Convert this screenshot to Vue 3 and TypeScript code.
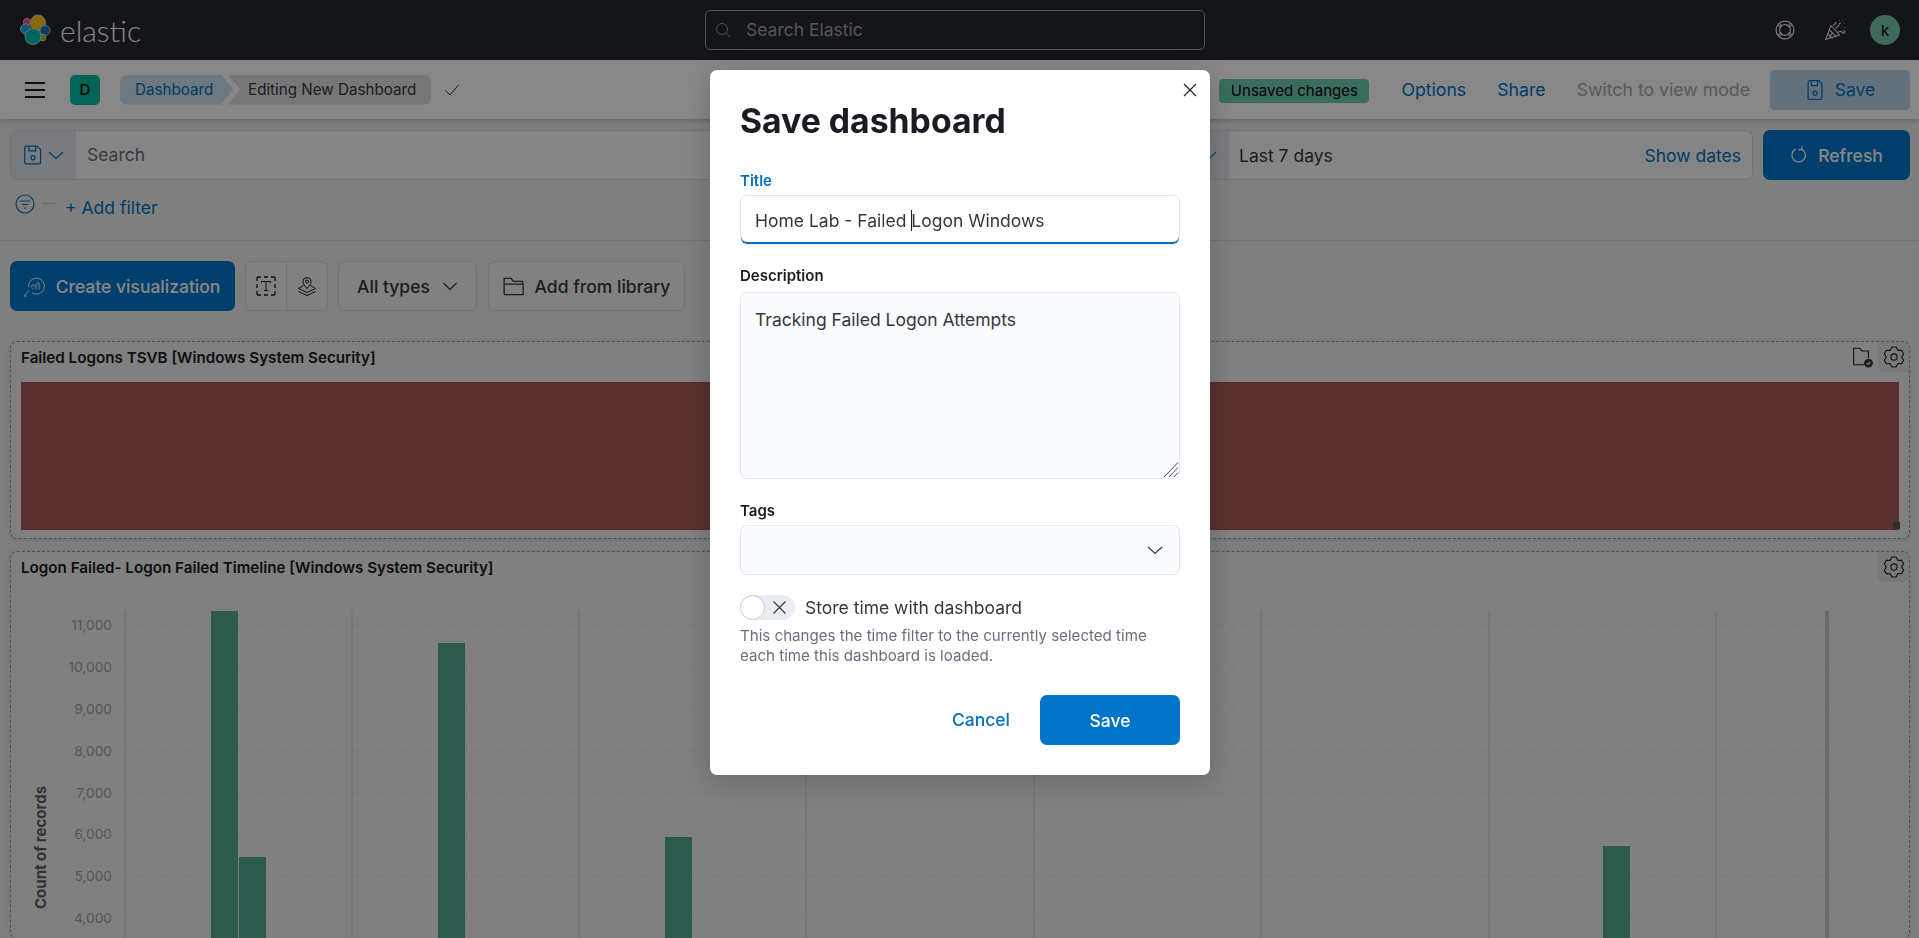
<script setup lang="ts">
const yTicks = [
  { label: '11,000', y: 625 },
  { label: '10,000', y: 667 },
  { label: '9,000', y: 709 },
  { label: '8,000', y: 751 },
  { label: '7,000', y: 793 },
  { label: '6,000', y: 834 },
  { label: '5,000', y: 876 },
  { label: '4,000', y: 918 }
]
const xTicks = [125, 352, 579, 806, 1034, 1261, 1489, 1716]
const bars = [
  { x: 211, w: 27, top: 611 },
  { x: 239, w: 27, top: 857 },
  { x: 438, w: 27, top: 643 },
  { x: 665, w: 27, top: 837 },
  { x: 1603, w: 27, top: 846 }
]

// six lobed outline, same shape for both panel gears
const gearPath = (() => {
  const pts: string[] = []
  for (let i = 0; i < 6; i++) {
    const a = (i * Math.PI) / 3 - Math.PI / 2
    const steps: [number, number][] = [
      [5.6, -0.52],
      [7.4, -0.2],
      [7.4, 0.2],
      [5.6, 0.52]
    ]
    for (const [r, d] of steps) {
      pts.push(`${(8 + r * Math.cos(a + d)).toFixed(2)} ${(8 + r * Math.sin(a + d)).toFixed(2)}`)
    }
  }
  return `M${pts.join('L')}Z`
})()
</script>

<template>
  <div class="page">
    <header class="top-bar">
      <div class="brand">
        <svg class="logo" width="32" height="32" viewBox="0 0 32 32">
          <g stroke="#e8e8e8" stroke-width="0.8">
            <circle cx="8" cy="8" r="3.6" fill="#f04e98" />
            <circle cx="6.5" cy="15" r="5" fill="#1ba9f5" />
            <ellipse cx="19" cy="9" rx="7.5" ry="8" fill="#fec514" />
            <circle cx="26" cy="16.5" r="5" fill="#0077cc" />
            <circle cx="23.5" cy="23.5" r="3.4" fill="#93c90e" />
            <circle cx="14" cy="22.5" r="8" fill="#00bfb3" />
          </g>
        </svg>
        <span class="wordmark">elastic</span>
      </div>
      <div class="global-search">
        <svg width="16" height="16" viewBox="0 0 16 16" fill="none" stroke="#9a9ca0">
          <circle cx="7" cy="7" r="5.5" />
          <path d="M11 11l4 4" />
        </svg>
        <span class="global-search-text">Search Elastic</span>
      </div>
      <div class="top-icons">
        <svg width="20" height="20" viewBox="0 0 22 22" fill="none" stroke="#e4e4e4" stroke-width="1.3">
          <circle cx="11" cy="11" r="9.8" />
          <circle cx="11" cy="11" r="6" />
          <path d="M5 3.800l3 3.200M17 3.800l-3 3.200M5 18.200l3-3.200M17 18.200l-3-3.200M3.400 5.600l3.400 2.600M18.600 5.600l-3.400 2.600M3.400 16.400l3.400-2.600M18.600 16.400l-3.400-2.600" />
        </svg>
        <svg class="party" width="22" height="22" viewBox="0 0 22 22" fill="none" stroke="#e4e4e4" stroke-width="1.1">
          <path d="M1.500 20.500L7 6.500l8.500 9.500z" stroke-linejoin="round" />
          <path d="M3.800 15l5 4.300M5.400 10.800l7 7.200M8.500 13l-3 6" />
          <path d="M9 6.500c1.500-1 3-1.500 3-3.500M11.500 9.500c1.500-2 3.500-2 3.500-4 0-1 1-1.500 1.800-1.300" />
          <path d="M14.500 13c1.500-1 3-.5 4 .5s2.200.8 2.500-.5c.2-1-1-1.600-1.700-1" />
          <path d="M15 1.500l.4.400M18.500 1l.4.400M20 4.500l.4.400M18 7l.4.400M20.500 8.500l.4.400" />
        </svg>
        <div class="user-avatar">k</div>
      </div>
    </header>

    <div class="sub-bar">
      <div class="burger"><i></i><i></i><i></i></div>
      <div class="app-badge">D</div>
      <nav class="crumbs">
        <span class="crumb crumb-link">Dashboard</span>
        <span class="crumb crumb-current">Editing New Dashboard</span>
      </nav>
      <svg class="crumb-check" width="16" height="16" viewBox="0 0 16 16" fill="none" stroke="#343741">
        <path d="M1.500 8.500L6 13 14.500 3" />
      </svg>
      <div class="sub-actions">
        <span class="unsaved">Unsaved changes</span>
        <a class="link">Options</a>
        <a class="link">Share</a>
        <a class="link disabled">Switch to view mode</a>
        <button class="save-top">
          <svg width="20" height="20" viewBox="0 0 16 16" fill="none" stroke="currentColor">
            <path d="M3 .5h8l2.500 2.500v11.500a1 1 0 01-1 1h-9a1 1 0 01-1-1v-13a1 1 0 011-1z" />
            <path d="M5 .5v4h5v-4" />
            <circle cx="8" cy="10.500" r="1.600" />
          </svg>
          Save
        </button>
      </div>
    </div>

    <div class="query-row">
      <div class="query-box">
        <div class="query-prepend">
          <svg width="22" height="22" viewBox="0 0 16 16" fill="none" stroke="#0071c2" stroke-width="0.9">
            <path d="M3 1.500h8l2.500 2.500v9.500a1 1 0 01-1 1h-9.500a1 1 0 01-1-1v-11a1 1 0 011-1z" />
            <path d="M5 1.500v3.500h5v-3.500" />
            <circle cx="8" cy="10" r="1.500" />
          </svg>
          <svg width="16" height="16" viewBox="0 0 16 16" fill="none" stroke="#0071c2" stroke-width="1.200">
            <path d="M1 5l7 6.500L15 5" />
          </svg>
        </div>
        <span class="query-text">Search</span>
      </div>
      <div class="time-box">
        <div class="time-prepend">
          <svg width="16" height="16" viewBox="0 0 16 16" fill="none" stroke="#0071c2" stroke-width="1.200">
            <path d="M2 5l6 6 6-6" />
          </svg>
        </div>
        <span class="time-value">Last 7 days</span>
        <a class="link show-dates">Show dates</a>
      </div>
      <button class="refresh">
        <svg width="18" height="18" viewBox="0 0 16 16" fill="none" stroke="currentColor" stroke-width="1.100">
          <path d="M10 2.600a6 6 0 11-5 .2" />
          <path d="M10.500 .5v3h-3" transform="translate(0 -.2)" />
        </svg>
        Refresh
      </button>
    </div>

    <div class="filter-row">
      <svg width="20" height="20" viewBox="0 0 20 20" fill="none" stroke="#0071c2" stroke-width="1.200">
        <circle cx="10" cy="10" r="9" />
        <path d="M5 7h10M7 10.500h6M9 14h2" />
      </svg>
      <span class="filter-dash"></span>
      <a class="link add-filter">+ Add filter</a>
    </div>

    <div class="toolbar">
      <button class="create-viz">
        <svg width="22" height="22" viewBox="0 0 22 22" fill="none" stroke="currentColor" stroke-width="0.9">
          <path d="M5.500 12a8 8 0 113.500 5.800" />
          <path d="M1 21l5-5.500M1 21h3" />
          <path d="M7.500 12.500l2.500-3 2 2 3.500-5" />
          <path d="M10 14.500v-2M13 14.500V11M16 14.500V8" />
        </svg>
        Create visualization
      </button>
      <div class="icon-group">
        <span class="icon-cell">
          <svg width="20" height="20" viewBox="0 0 20 20" fill="none" stroke="#1a1c21">
            <path d="M1 5V2a1 1 0 011-1h3M8 1h4M15 1h3a1 1 0 011 1v3M19 8v4M19 15v3a1 1 0 01-1 1h-3M12 19H8M5 19H2a1 1 0 01-1-1v-3M1 12V8" stroke-width="1.300" />
            <path d="M5.500 7V5.500h9V7M10 5.500v9M8 14.500h4" />
          </svg>
        </span>
        <span class="icon-cell">
          <svg width="20" height="20" viewBox="0 0 20 20" fill="none" stroke="#1a1c21">
            <path d="M10 12.500C7.500 9.500 6 8 6 5.500a4 4 0 018 0c0 2.500-1.500 4-4 7z" />
            <circle cx="10" cy="5.500" r="1.500" />
            <path d="M6.500 9.500L1.500 12.500 10 16.500l8.500-4-5-3M1.500 15.500L10 19.500l8.500-4" />
          </svg>
        </span>
      </div>
      <button class="tool-btn all-types">
        All types
        <svg width="16" height="16" viewBox="0 0 16 16" fill="none" stroke="#343741" stroke-width="1.200">
          <path d="M1.500 5l6.500 6.500L14.500 5" />
        </svg>
      </button>
      <button class="tool-btn library">
        <svg width="23" height="23" viewBox="0 0 20 20" fill="none" stroke="#343741" stroke-width="1.100">
          <path d="M1 17V3h6l2 2.500h8V8M1 17h16.500V8H1" />
        </svg>
        Add from library
      </button>
    </div>

    <section class="panel panel-metric">
      <div class="panel-head">
        <h3>Failed Logons TSVB [Windows System Security]</h3>
        <svg class="folder-check" width="22" height="22" viewBox="0 0 20 20" fill="none" stroke="#1a1c21">
          <path d="M12 17H1.500V2H7l2 2.500h6V11" />
          <circle cx="15" cy="15.500" r="4" fill="#343741" stroke="none" />
          <path d="M13.300 15.500l1.300 1.300 2-2.400" stroke="#fff" />
        </svg>
        <span class="gear-cell">
          <svg width="22" height="22" viewBox="0 0 16 16" fill="none" stroke="#1a1c21" stroke-width="0.800" stroke-linejoin="round">
            <path :d="gearPath" />
            <circle cx="8" cy="8" r="2.300" />
          </svg>
        </span>
      </div>
      <div class="metric-fill"></div>
      <span class="resize-handle"></span>
    </section>

    <section class="panel panel-chart">
      <div class="panel-head">
        <h3>Logon Failed- Logon Failed Timeline [Windows System Security]</h3>
        <span class="gear-cell">
          <svg width="22" height="22" viewBox="0 0 16 16" fill="none" stroke="#1a1c21" stroke-width="0.800" stroke-linejoin="round">
            <path :d="gearPath" />
            <circle cx="8" cy="8" r="2.300" />
          </svg>
        </span>
      </div>
      <svg class="chart" width="1898" height="338" viewBox="11 600 1898 338">
        <line
          v-for="t in yTicks"
          :key="t.label"
          x1="125"
          x2="1830"
          :y1="t.y"
          :y2="t.y"
          stroke="#e6e6e6"
          stroke-dasharray="6 6"
        />
        <line v-for="x in xTicks" :key="x" :x1="x" :x2="x" y1="611" y2="938" stroke="#dcdcdc" stroke-width="1.500" />
        <rect x="1825" y="611" width="4" height="327" fill="#c8c8c8" />
        <rect v-for="b in bars" :key="b.x" :x="b.x" :y="b.top" :width="b.w" :height="938 - b.top" fill="#54ab92" />
        <text v-for="t in yTicks" :key="t.label" class="tick" x="112" :y="t.y + 5" text-anchor="end">{{ t.label }}</text>
        <text class="axis-title" transform="translate(46 909) rotate(-90)">Count of records</text>
      </svg>
    </section>

    <div class="mask">
      <div class="modal">
        <svg class="modal-close" width="14" height="14" viewBox="0 0 14 14" fill="none" stroke="#1a1c21" stroke-width="1.100">
          <path d="M1 1l12 12M13 1L1 13" />
        </svg>
        <h2>Save dashboard</h2>

        <label class="field-label active first">Title</label>
        <div class="field field-focus">
          <span>Home Lab - Failed <i class="caret"></i>Logon Windows</span>
        </div>

        <label class="field-label desc">Description</label>
        <div class="field field-area">
          <span>Tracking Failed Logon Attempts</span>
          <svg class="area-grip" width="16" height="17" viewBox="0 0 16 17" stroke="#343741" stroke-width="0.900">
            <path d="M1 16L15 1.500M6 16L15 6.500M11 16l4-4.500" />
          </svg>
        </div>

        <label class="field-label tags">Tags</label>
        <div class="field field-select">
          <svg width="16" height="16" viewBox="0 0 16 16" fill="none" stroke="#343741" stroke-width="1.200">
            <path d="M1 5l7 6.500L15 5" />
          </svg>
        </div>

        <div class="toggle-row">
          <span class="toggle">
            <span class="knob"></span>
            <svg width="13" height="13" viewBox="0 0 13 13" fill="none" stroke="#343741" stroke-width="1.100">
              <path d="M.5.5l12 12M12.500.5l-12 12" />
            </svg>
          </span>
          <span class="toggle-label">Store time with dashboard</span>
        </div>
        <p class="help">This changes the time filter to the currently selected time each time this dashboard is loaded.</p>

        <div class="modal-foot">
          <a class="cancel">Cancel</a>
          <button class="save-main">Save</button>
        </div>
      </div>
    </div>
  </div>
</template>

<style>
html,
body {
  height: 100%;
  overflow: hidden;
}
</style>

<style scoped>
.page {
  position: relative;
  height: 938px;
  overflow: hidden;
  background: #f0f0f0;
  font-family: Inter, 'Liberation Sans', sans-serif;
  font-size: 17.5px;
  color: #343741;
}

button {
  font-family: inherit;
  font-size: inherit;
  border: 0;
  display: flex;
  align-items: center;
  justify-content: center;
}

.link {
  color: #0071c2;
}

.link.disabled {
  color: #a2abba;
}

.top-bar {
  height: 60px;
  background: #262830;
  display: flex;
  align-items: center;
  position: relative;
}

.brand {
  width: 705px;
  display: flex;
  align-items: center;
  padding-left: 19px;
  box-sizing: border-box;
}

.wordmark {
  margin-left: 9px;
  font-family: Lato, sans-serif;
  font-weight: 300;
  font-size: 30px;
  color: #fff;
  line-height: 40px;
}

.global-search {
  width: 500px;
  height: 40px;
  box-sizing: border-box;
  border: 1px solid #9b9da1;
  border-radius: 5px;
  background: #262830;
  display: flex;
  align-items: center;
  gap: 15px;
  padding-left: 9px;
  color: #9fa2a8;
}

.global-search-text {
  margin-bottom: 1px;
}

.top-icons {
  margin-left: auto;
  padding-right: 19px;
  display: flex;
  align-items: center;
  gap: 28px;
}

.party {
  margin-left: 1px;
}

.user-avatar {
  margin-left: -4px;
  width: 30px;
  height: 30px;
  border-radius: 50%;
  background: #78c8ac;
  color: #000;
  font-size: 15px;
  display: flex;
  align-items: center;
  justify-content: center;
}

.sub-bar {
  height: 59px;
  background: #fff;
  display: flex;
  align-items: center;
  padding: 0 9px 0 25px;
  box-shadow: 0 2px 4px rgba(0, 0, 0, 0.18);
  position: relative;
}

.burger {
  width: 20px;
  display: flex;
  flex-direction: column;
  gap: 5px;
}

.burger i {
  display: block;
  height: 2px;
  background: #1a1c21;
}

.app-badge {
  margin-left: 25px;
  width: 30px;
  height: 30px;
  border-radius: 5px;
  background: #00bfa5;
  color: #000;
  font-size: 15px;
  font-weight: 500;
  display: flex;
  align-items: center;
  justify-content: center;
}

.crumbs {
  margin-left: 20px;
  display: flex;
  font-size: 15.2px;
}

.crumb {
  height: 30px;
  line-height: 30px;
  box-sizing: border-box;
}

.crumb-link {
  width: 113px;
  padding-left: 15px;
  background: #cfe2f1;
  color: #0071c2;
  border-radius: 7px 0 0 7px;
  clip-path: polygon(0 0, calc(100% - 12px) 0, 100% 50%, calc(100% - 12px) 100%, 0 100%);
}

.crumb-current {
  width: 203px;
  margin-left: -5px;
  padding-left: 20px;
  background: #e0e0e0;
  color: #343741;
  border-radius: 0 7px 7px 0;
  clip-path: polygon(0 0, 100% 0, 100% 100%, 0 100%, 12px 50%);
}

.crumb-check {
  margin-left: 13px;
}

.sub-actions {
  margin-left: auto;
  display: flex;
  align-items: center;
}

.unsaved {
  width: 150px;
  height: 24px;
  line-height: 24px;
  margin-top: 3px;
  margin-right: 1px;
  text-align: center;
  border-radius: 4px;
  background: #6dccb1;
  color: #000;
  font-size: 15px;
}

.sub-actions .link {
  margin-left: 31px;
  font-size: 17.7px;
}

.save-top {
  margin-left: 20px;
  width: 140px;
  height: 40px;
  gap: 10px;
  border-radius: 5px;
  background: #bcd6ea;
  color: #0071c2;
}

.query-row {
  margin-top: 11px;
  padding: 0 9px 0 10px;
  height: 50px;
  display: flex;
}

.query-box {
  flex: 1;
  display: flex;
  align-items: center;
  background: #fbfcfd;
  border: 1px solid #d3dae6;
  border-right: 0;
  border-radius: 7px 0 0 7px;
  overflow: hidden;
}

.query-prepend {
  width: 65px;
  height: 100%;
  box-sizing: border-box;
  padding-right: 2px;
  background: #e6e9f0;
  display: flex;
  align-items: center;
  justify-content: center;
  gap: 4px;
}

.query-text {
  margin-left: 11px;
  margin-bottom: 1px;
  color: #69707d;
}

.time-box {
  width: 564px;
  display: flex;
  align-items: center;
  background: #fbfcfd;
  border: 1px solid #d3dae6;
  border-radius: 0 7px 7px 0;
  box-sizing: border-box;
  overflow: hidden;
}

.time-prepend {
  width: 39px;
  height: 100%;
  background: #e6e9f0;
  display: flex;
  align-items: center;
  justify-content: center;
}

.time-value {
  margin-left: 10px;
}

.show-dates {
  margin-left: auto;
  margin-right: 11px;
}

.refresh {
  margin-left: 10px;
  width: 147px;
  height: 50px;
  border-radius: 7px;
  gap: 10px;
  background: #0077cc;
  color: #fff;
  font-weight: 500;
}

.filter-row {
  height: 61px;
  box-sizing: border-box;
  padding: 14px 0 0 15px;
  display: flex;
  align-items: flex-start;
  border-bottom: 1px solid #d3dae6;
}

.filter-dash {
  width: 13px;
  height: 1px;
  margin: 9px 0 0 7px;
  background: #c4cad4;
}

.add-filter {
  margin: 3px 0 0 10px;
}

.toolbar {
  margin-top: 20px;
  padding-left: 10px;
  display: flex;
  height: 50px;
}

.create-viz {
  width: 225px;
  height: 50px;
  gap: 9px;
  border-radius: 7px;
  background: #0077cc;
  color: #fff;
  font-weight: 500;
}

.create-viz svg {
  margin: 0 2px 0 -2px;
}

.icon-group {
  margin-left: 10px;
  display: flex;
  width: 83px;
  height: 50px;
  box-sizing: border-box;
  border: 1px solid #d3dae6;
  border-radius: 7px;
  background: #f3f3f3;
}

.icon-cell {
  flex: 1;
  display: flex;
  align-items: center;
  justify-content: center;
}

.icon-cell + .icon-cell {
  border-left: 1px solid #d3dae6;
}

.tool-btn {
  margin-left: 10px;
  height: 50px;
  box-sizing: border-box;
  border: 1px solid #d3dae6;
  border-radius: 7px;
  background: #f3f3f3;
  color: #343741;
  font-weight: 500;
}

.all-types {
  width: 139px;
  gap: 12px;
}

.library {
  margin-left: 11px;
  width: 197px;
  gap: 9px;
}

.panel {
  margin: 0 9px 0 10px;
  border: 1px dashed #9c9c9c;
  border-radius: 7px;
  background: #f1f1f1;
  position: relative;
  box-shadow: 0 1px 5px rgba(0, 0, 0, 0.12);
}

.panel-metric {
  margin-top: 30px;
  height: 198px;
  box-sizing: border-box;
}

.panel-chart {
  margin-top: 12px;
}

.panel-head {
  height: 29px;
  padding-left: 10px;
  display: flex;
  align-items: center;
}

.panel-head h3 {
  margin: 2px 0 0;
  font-size: 15.2px;
  font-weight: 600;
  color: #1a1c21;
}

.folder-check {
  margin-left: auto;
  margin-right: 4px;
}

.gear-cell {
  margin-left: auto;
  width: 31px;
  height: 30px;
  border-radius: 0 6px 0 6px;
  background: #e4e4e4;
  display: flex;
  align-items: center;
  justify-content: center;
}

.folder-check + .gear-cell {
  margin-left: 0;
}

.metric-fill {
  margin: 11px 10px 0;
  height: 148px;
  background: #aa5a5a;
}

.resize-handle {
  position: absolute;
  right: 9px;
  bottom: 9px;
  width: 7px;
  height: 7px;
  background: #555;
}

.chart {
  display: block;
  margin-top: 19px;
  font-family: Inter, sans-serif;
}

.tick {
  font-size: 13.75px;
  fill: #a0a4ab;
}

.axis-title {
  font-size: 15px;
  font-weight: 700;
  fill: #5c5f66;
}

.mask {
  position: fixed;
  inset: 0;
  background: rgba(0, 0, 0, 0.47);
  display: flex;
  justify-content: center;
  align-items: flex-start;
  padding: 70px 0 0 1px;
}

.modal {
  position: relative;
  width: 500px;
  height: 705px;
  box-sizing: border-box;
  padding: 30px;
  border-radius: 7px;
  background: #fff;
  box-shadow: 0 6px 30px rgba(0, 0, 0, 0.2);
}

.modal-close {
  position: absolute;
  right: 13px;
  top: 13px;
}

.modal h2 {
  margin: 0;
  font-size: 33.75px;
  line-height: 42px;
  font-weight: 700;
  color: #1a1c21;
}

.field-label {
  display: block;
  height: 20px;
  line-height: 20px;
  font-size: 15px;
  font-weight: 600;
  color: #1a1c21;
}

.field-label.active {
  color: #0071c2;
}

.field-label.first {
  margin-top: 29px;
  margin-bottom: 4px;
}

.field-label.desc {
  margin-top: 21px;
  margin-bottom: 6px;
}

.field-label.tags {
  margin-top: 22px;
  margin-bottom: 4px;
}

.field {
  position: relative;
  box-sizing: border-box;
  border: 1px solid #e3e7f0;
  border-radius: 7px;
  background: #fbfcfd;
  padding: 0 14px;
}

.field-focus {
  height: 50px;
  line-height: 50px;
  background: #fff;
  box-shadow: inset 0 -2px 0 #0071c2;
  overflow: hidden;
}

.caret {
  display: inline-block;
  width: 1px;
  height: 21px;
  margin-right: -1px;
  vertical-align: -4px;
  background: #1a1c21;
}

.field-area {
  height: 187px;
  padding-top: 16px;
  line-height: 21px;
}

.area-grip {
  position: absolute;
  right: 0;
  bottom: 0;
}

.field-select {
  height: 50px;
  display: flex;
  align-items: center;
  justify-content: flex-end;
  padding-right: 16px;
}

.toggle-row {
  margin-top: 20px;
  display: flex;
  align-items: center;
  gap: 10px;
  height: 25px;
}

.toggle {
  position: relative;
  width: 55px;
  height: 25px;
  border-radius: 13px;
  background: #e9edf3;
  display: flex;
  align-items: center;
  justify-content: flex-end;
  padding-right: 9px;
  box-sizing: border-box;
}

.knob {
  position: absolute;
  left: 0;
  top: 0;
  width: 25px;
  height: 25px;
  box-sizing: border-box;
  border-radius: 50%;
  background: #fff;
  border: 1px solid #c9cbcf;
}

.help {
  margin: 6px 0 0;
  font-size: 15.1px;
  line-height: 20px;
  color: #69707d;
}

.modal-foot {
  margin-top: 29px;
  display: flex;
  justify-content: flex-end;
  align-items: center;
  gap: 30px;
}

.cancel {
  margin-bottom: 1px;
  color: #0071c2;
  font-weight: 500;
}

.save-main {
  width: 140px;
  height: 50px;
  padding-bottom: 1px;
  border-radius: 7px;
  background: #0074c8;
  color: #fff;
  font-weight: 500;
}
</style>
